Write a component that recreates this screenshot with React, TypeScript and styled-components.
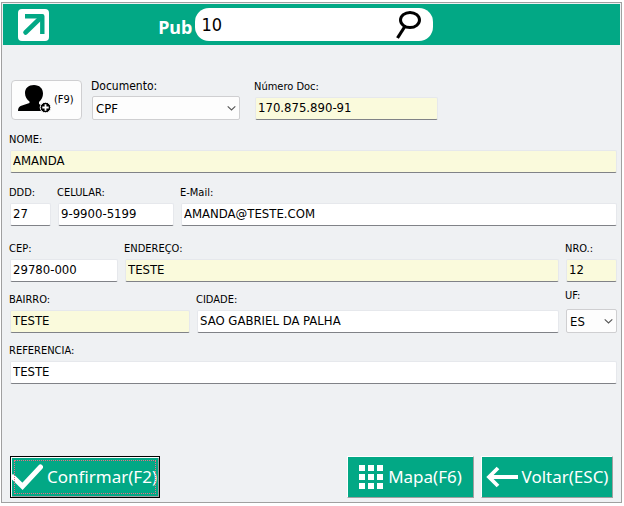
import React from "react";
import styled, { createGlobalStyle, css } from "styled-components";

const green = "#02a885";
const panel = "#eff1f3";
const required = "#fafadc";
const formFont = '"DejaVu Sans Condensed", "DejaVu Sans", sans-serif';
const uiFont = '"Noto Sans", "Open Sans", sans-serif';

const GlobalStyle = createGlobalStyle`
  *, *::before, *::after { box-sizing: border-box; }
  body { margin: 0; background: #fff; color: #000; font-family: ${formFont}; }
  button, input, select { font: inherit; color: inherit; margin: 0; }
`;

const Page = styled.div`
  min-height: 100vh;
  padding: 2px 2px 3px 1px;
  display: flex;
`;

const Frame = styled.main`
  flex: 1;
  min-width: 0;
  display: flex;
  flex-direction: column;
  padding: 1px;
  border: 1px solid #a0a0a0;
  background: ${panel};
`;

const Header = styled.header`
  display: flex;
  align-items: center;
  height: 41px;
  padding-left: 15px;
  background: ${green};
`;

const Logo = styled.svg`
  width: 31px;
  height: 32px;
  flex: none;
`;

const SearchLabel = styled.label`
  margin-left: auto;
  padding: 4px 3px 0 0;
  color: #fff;
  font: bold 18px/24px ${uiFont};
`;

const SearchPill = styled.div`
  display: flex;
  align-items: center;
  width: 238px;
  height: 33px;
  margin-right: 31%;
  padding: 0 12px 0 6px;
  border-radius: 14px;
  background: #fff;
`;

const SearchInput = styled.input`
  flex: 1;
  min-width: 0;
  height: 28px;
  padding: 0;
  border: 0;
  outline: 0;
  background: transparent;
  font-size: 18px;
`;

const IconButton = styled.button`
  display: flex;
  padding: 0;
  border: 0;
  background: transparent;
`;

const Form = styled.form`
  flex: 1;
  display: flex;
  flex-direction: column;
  padding: 33px 3px 3px 7px;
`;

const Row = styled.div<{ $space?: number }>`
  display: flex;
  align-items: flex-end;
  gap: 7px;
  margin-top: ${(p) => p.$space ?? 0}px;
`;

const FieldBox = styled.div<{ $width?: number; $indent?: number }>`
  display: flex;
  flex-direction: column;
  min-width: 0;
  margin-left: ${(p) => p.$indent ?? 0}px;
  ${(p) => (p.$width ? css`width: ${p.$width}px; flex: none;` : css`flex: 1;`)}
`;

const Label = styled.label<{ $large?: boolean; $space?: number }>`
  margin: 0 0 ${(p) => p.$space ?? 2}px -1px;
  font-size: ${(p) => (p.$large ? 12 : 11)}px;
  line-height: 16px;
  white-space: nowrap;
`;

const TextInput = styled.input<{ $required?: boolean }>`
  width: 100%;
  height: 23px;
  padding: 0 2px 2px;
  border: 1px solid #e6e8ec;
  border-bottom-color: #808287;
  border-radius: 2px;
  outline: 0;
  background: ${(p) => (p.$required ? required : "#fff")};
  font-size: 13px;
`;

const SelectWrap = styled.div`
  position: relative;
  display: flex;
`;

const Select = styled.select`
  appearance: none;
  width: 100%;
  height: 24px;
  padding: 0 18px 0 3px;
  border: 1px solid #cfcfd1;
  border-radius: 2px;
  outline: 0;
  background: #fdfdfd;
  font-size: 13px;
`;

const Chevron = styled.svg`
  position: absolute;
  right: 4px;
  top: 9px;
  width: 9px;
  height: 7px;
  pointer-events: none;
`;

const CustomerButton = styled.button`
  display: flex;
  align-items: center;
  gap: 3px;
  width: 71px;
  height: 40px;
  margin-left: 1px;
  padding: 0 0 2px 6px;
  border: 1px solid #cfcfd1;
  border-radius: 4px;
  background: #fdfdfd;
  font-size: 11px;
`;

const Footer = styled.footer`
  display: flex;
  gap: 7px;
  margin-top: auto;
  padding-right: 4px;
`;

const ActionButton = styled.button<{ $width: number; $focused?: boolean }>`
  position: relative;
  display: flex;
  align-items: center;
  justify-content: center;
  gap: 4px;
  width: ${(p) => p.$width}px;
  height: 42px;
  padding: 0;
  border: 1px solid;
  border-color: #fff #a0a0a0 #a0a0a0 #fff;
  background: ${green};
  color: #fff;
  font: 17px/24px ${uiFont};
  white-space: nowrap;

  ${(p) =>
    p.$focused &&
    css`
      margin-right: auto;
      padding-right: 2px;
      border-color: #000;
      box-shadow: inset 1px 1px #fff, inset -1px -1px #a0a0a0;

      &::after {
        content: "";
        position: absolute;
        inset: 3px;
        border: 1px dotted #f06a86;
      }
    `}
`;

type FieldProps = {
  id: string;
  label: string;
  value: string;
  width?: number;
  indent?: number;
  required?: boolean;
};

function Field({ id, label, value, width, indent, required }: FieldProps) {
  return (
    <FieldBox $width={width} $indent={indent}>
      <Label htmlFor={id}>{label}</Label>
      <TextInput id={id} defaultValue={value} $required={required} />
    </FieldBox>
  );
}

type SelectFieldProps = {
  id: string;
  label: string;
  options: string[];
  width: number;
  indent?: number;
  large?: boolean;
  labelSpace?: number;
};

function SelectField({ id, label, options, width, indent, large, labelSpace }: SelectFieldProps) {
  return (
    <FieldBox $width={width} $indent={indent}>
      <Label htmlFor={id} $large={large} $space={labelSpace}>{label}</Label>
      <SelectWrap>
        <Select id={id} defaultValue={options[0]}>
          {options.map((o) => (
            <option key={o}>{o}</option>
          ))}
        </Select>
        <Chevron viewBox="0 0 9 7" aria-hidden="true">
          <path d="M.7 1.3 4.5 5 8.3 1.3" fill="none" stroke="#555" strokeWidth="1.1" />
        </Chevron>
      </SelectWrap>
    </FieldBox>
  );
}

export default function App() {
  return (
    <Page>
      <GlobalStyle />
      <Frame>
        <Header>
          <Logo viewBox="0 0 31 32" aria-hidden="true">
            <rect width="31" height="32" rx="4" fill="#fff" />
            <path d="M7 7.200H24.300V25" fill="none" stroke={green} strokeWidth="4.400" strokeLinejoin="round" />
            <path d="M23.500 8 7.500 23.500" stroke={green} strokeWidth="4.600" strokeLinecap="round" />
          </Logo>
          <SearchLabel htmlFor="pub">Pub</SearchLabel>
          <SearchPill>
            <SearchInput id="pub" defaultValue="10" />
            <IconButton type="button" aria-label="Pesquisar">
              <svg width="26" height="30" viewBox="0 0 26 30" aria-hidden="true">
                <ellipse cx="15" cy="10" rx="9.500" ry="7.500" fill="none" stroke="#000" strokeWidth="3" />
                <path d="M10.500 15.500 2.500 28" stroke="#000" strokeWidth="3.200" />
              </svg>
            </IconButton>
          </SearchPill>
        </Header>

        <Form onSubmit={(e) => e.preventDefault()}>
          <Row>
            <CustomerButton type="button">
              <svg width="33" height="28" viewBox="0 0 33 28" aria-hidden="true">
                <path d="M16 0c5.500 0 9 3.500 9 8.500 0 3.500-1.500 6.500-4 8.500v2l4 2v5H0c0-3 1-4.500 4-5.500l7.500-2.500v-1.500C9 14.500 7 12 7 8c0-5 3.500-8 9-8Z" fill="#000" />
                <circle cx="27.500" cy="22.500" r="5.300" fill="#000" stroke="#fdfdfd" strokeWidth="1" />
                <path d="M27.500 19.300v6.400M24.300 22.500h6.400" stroke="#fff" strokeWidth="1.800" />
              </svg>
              (F9)
            </CustomerButton>
            <SelectField id="documento" label="Documento:" options={["CPF", "CNPJ"]} width={148} indent={3} large />
            <Field id="numero-doc" label="Número Doc:" value="170.875.890-91" width={183} indent={8} required />
          </Row>
          <Row $space={12}>
            <Field id="nome" label="NOME:" value="AMANDA" required />
          </Row>
          <Row $space={12}>
            <Field id="ddd" label="DDD:" value="27" width={41} />
            <Field id="celular" label="CELULAR:" value="9-9900-5199" width={116} />
            <Field id="email" label="E-Mail:" value="AMANDA@TESTE.COM" />
          </Row>
          <Row $space={15}>
            <Field id="cep" label="CEP:" value="29780-000" width={108} />
            <Field id="endereco" label="ENDEREÇO:" value="TESTE" required />
            <Field id="nro" label="NRO.:" value="12" width={51} required />
          </Row>
          <Row $space={6}>
            <Field id="bairro" label="BAIRRO:" value="TESTE" width={180} required />
            <Field id="cidade" label="CIDADE:" value="SAO GABRIEL DA PALHA" />
            <SelectField id="uf" label="UF:" options={["ES", "MG", "RJ", "SP"]} width={51} labelSpace={5} />
          </Row>
          <Row $space={10}>
            <Field id="referencia" label="REFERENCIA:" value="TESTE" />
          </Row>
          <Footer>
            <ActionButton type="submit" $width={150} $focused>
              <svg width="32" height="26" viewBox="0 0 32 26" aria-hidden="true">
                <path d="M2 13 11.500 22.300 29.500 3" fill="none" stroke="#fff" strokeWidth="5" strokeLinecap="round" />
              </svg>
              Confirmar(F2)
            </ActionButton>
            <ActionButton type="button" $width={127}>
              <svg width="25" height="25" viewBox="0 0 25 25" fill="#fff" aria-hidden="true">
                {[0, 9, 18].map((y) =>
                  [0, 9, 18].map((x) => <rect key={`${x}-${y}`} x={x} y={y} width="6" height="6" />)
                )}
              </svg>
              Mapa(F6)
            </ActionButton>
            <ActionButton type="button" $width={132}>
              <svg width="32" height="22" viewBox="0 0 32 22" aria-hidden="true">
                <path d="M32 11H3M12 2 3 11l9 9" fill="none" stroke="#fff" strokeWidth="3.800" />
              </svg>
              Voltar(ESC)
            </ActionButton>
          </Footer>
        </Form>
      </Frame>
    </Page>
  );
}
